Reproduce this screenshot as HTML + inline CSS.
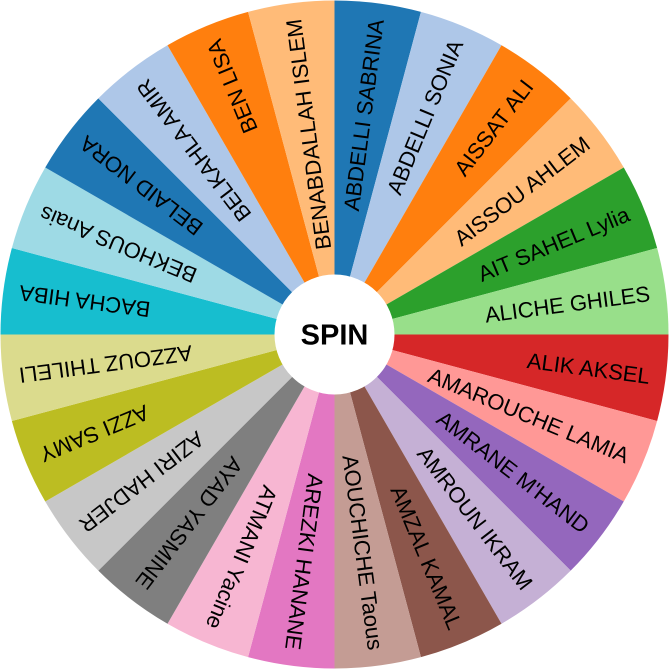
<!DOCTYPE html>
<html><head><meta charset="utf-8"><style>
html,body{margin:0;padding:0;background:#fff;width:669px;height:669px;overflow:hidden}
text{font-family:"Liberation Sans","DejaVu Sans",sans-serif;font-size:22px;fill:#000}
</style></head><body>
<svg width="669" height="669" viewBox="0 0 669 669" xmlns="http://www.w3.org/2000/svg">
<defs><path id="w" d="M0 0 L0 -334 A334 334 0 0 1 86.45 -322.62 Z"/></defs>
<g transform="translate(334.5,334.5)">
<g transform="rotate(0)"><use href="#w" fill="#1f77b4"/><text transform="rotate(-82.5)" x="318" y="8" text-anchor="end">ABDELLI SABRINA</text></g>
<g transform="rotate(15)"><use href="#w" fill="#aec7e8"/><text transform="rotate(-82.5)" x="318" y="8" text-anchor="end">ABDELLI SONIA</text></g>
<g transform="rotate(30)"><use href="#w" fill="#ff7f0e"/><text transform="rotate(-82.5)" x="318" y="8" text-anchor="end">AISSAT ALI</text></g>
<g transform="rotate(45)"><use href="#w" fill="#ffbb78"/><text transform="rotate(-82.5)" x="318" y="8" text-anchor="end">AISSOU AHLEM</text></g>
<g transform="rotate(60)"><use href="#w" fill="#2ca02c"/><text transform="rotate(-82.5)" x="318" y="8" text-anchor="end">AIT SAHEL Lylia</text></g>
<g transform="rotate(75)"><use href="#w" fill="#98df8a"/><text transform="rotate(-82.5)" x="318" y="8" text-anchor="end">ALICHE GHILES</text></g>
<g transform="rotate(90)"><use href="#w" fill="#d62728"/><text transform="rotate(-82.5)" x="318" y="8" text-anchor="end">ALIK AKSEL</text></g>
<g transform="rotate(105)"><use href="#w" fill="#ff9896"/><text transform="rotate(-82.5)" x="318" y="8" text-anchor="end">AMAROUCHE LAMIA</text></g>
<g transform="rotate(120)"><use href="#w" fill="#9467bd"/><text transform="rotate(-82.5)" x="318" y="8" text-anchor="end">AMRANE M'HAND</text></g>
<g transform="rotate(135)"><use href="#w" fill="#c5b0d5"/><text transform="rotate(-82.5)" x="318" y="8" text-anchor="end">AMROUN IKRAM</text></g>
<g transform="rotate(150)"><use href="#w" fill="#8c564b"/><text transform="rotate(-82.5)" x="318" y="8" text-anchor="end">AMZAL KAMAL</text></g>
<g transform="rotate(165)"><use href="#w" fill="#c49c94"/><text transform="rotate(-82.5)" x="318" y="8" text-anchor="end">AOUCHICHE Taous</text></g>
<g transform="rotate(180)"><use href="#w" fill="#e377c2"/><text transform="rotate(-82.5)" x="318" y="8" text-anchor="end">AREZKI HANANE</text></g>
<g transform="rotate(195)"><use href="#w" fill="#f7b6d2"/><text transform="rotate(-82.5)" x="318" y="8" text-anchor="end">ATMANI Yacine</text></g>
<g transform="rotate(210)"><use href="#w" fill="#7f7f7f"/><text transform="rotate(-82.5)" x="318" y="8" text-anchor="end">AYAD YASMINE</text></g>
<g transform="rotate(225)"><use href="#w" fill="#c7c7c7"/><text transform="rotate(-82.5)" x="318" y="8" text-anchor="end">AZIRI HADJER</text></g>
<g transform="rotate(240)"><use href="#w" fill="#bcbd22"/><text transform="rotate(-82.5)" x="318" y="8" text-anchor="end">AZZI SAMY</text></g>
<g transform="rotate(255)"><use href="#w" fill="#dbdb8d"/><text transform="rotate(-82.5)" x="318" y="8" text-anchor="end">AZZOUZ THILELI</text></g>
<g transform="rotate(270)"><use href="#w" fill="#17becf"/><text transform="rotate(-82.5)" x="318" y="8" text-anchor="end">BACHA HIBA</text></g>
<g transform="rotate(285)"><use href="#w" fill="#9edae5"/><text transform="rotate(-82.5)" x="318" y="8" text-anchor="end">BEKHOUS Anais</text></g>
<g transform="rotate(300)"><use href="#w" fill="#1f77b4"/><text transform="rotate(-82.5)" x="318" y="8" text-anchor="end">BELAID NORA</text></g>
<g transform="rotate(315)"><use href="#w" fill="#aec7e8"/><text transform="rotate(-82.5)" x="318" y="8" text-anchor="end">BELKAHLA AMIR</text></g>
<g transform="rotate(330)"><use href="#w" fill="#ff7f0e"/><text transform="rotate(-82.5)" x="318" y="8" text-anchor="end">BEN LISA</text></g>
<g transform="rotate(345)"><use href="#w" fill="#ffbb78"/><text transform="rotate(-82.5)" x="318" y="8" text-anchor="end">BENABDALLAH ISLEM</text></g>
<circle r="60" fill="#fff"/>
<text x="0" y="10" text-anchor="middle" style="font-size:29px;font-weight:bold">SPIN</text>
</g>
</svg>
</body></html>
